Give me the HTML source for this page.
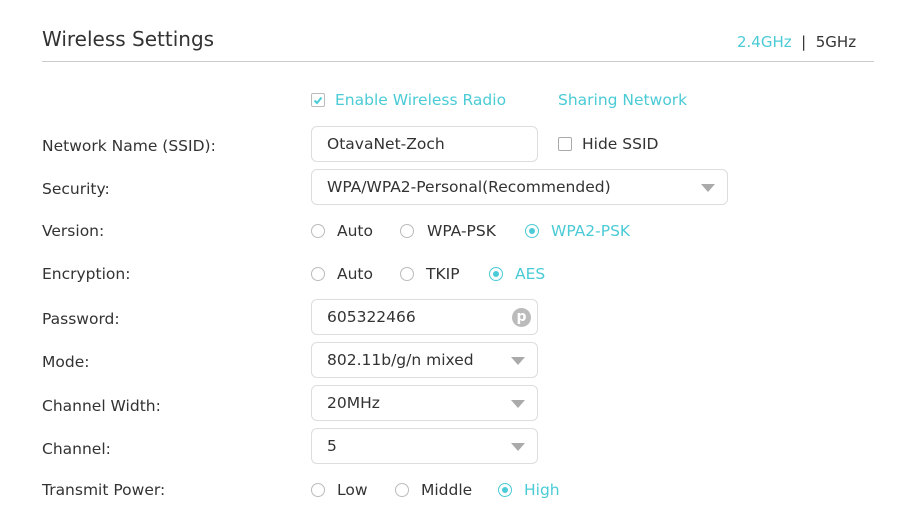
<!DOCTYPE html><html><head><style>
body{margin:0;width:899px;height:520px;background:#fff;font-family:"DejaVu Sans","Liberation Sans",sans-serif;font-size:15.5px;color:#333;position:relative;overflow:hidden}
.a{position:absolute;white-space:nowrap}
.lbl{left:42px}
.box{position:absolute;left:311px;width:225px;height:34px;border:1px solid #ddd;border-radius:6px;box-sizing:content-box}
.box span{position:absolute;left:15px;top:8px}
.tri{position:absolute;right:12px;top:14px;width:0;height:0;border-left:7px solid transparent;border-right:7px solid transparent;border-top:8px solid #aaa}
.r{position:absolute;width:12px;height:12px;border:1px solid #bbb;border-radius:50%}
.r.on{border-color:#4acbd6}
.r.on::after{content:"";position:absolute;left:3px;top:3px;width:6px;height:6px;border-radius:50%;background:#4acbd6}
.c{color:#4acbd6}
</style></head><body>
<div class="a" style="left:42px;top:27px;font-size:20px;color:#333">Wireless Settings</div>
<div class="a" style="left:737px;top:33px;font-size:15px"><span class="c">2.4GHz</span> &nbsp;| &nbsp;5GHz</div>
<div class="a" style="left:42px;top:61px;width:832px;height:1px;background:#ccc"></div>

<div class="a" style="left:311px;top:93px;width:12px;height:12px;border:1px solid #bbb;border-radius:2px"><svg width="12" height="12" style="position:absolute;left:0;top:0"><path d="M2.5 6.5 L5 9 L9.5 3.5" stroke="#4acbd6" stroke-width="2" fill="none"/></svg></div>
<div class="a c" style="left:335px;top:91px">Enable Wireless Radio</div>
<div class="a c" style="left:558px;top:91px">Sharing Network</div>

<div class="a lbl" style="top:137px">Network Name (SSID):</div>
<div class="box" style="top:126px"><span>OtavaNet-Zoch</span></div>
<div class="a" style="left:558px;top:137px;width:12px;height:12px;border:1px solid #aaa;border-radius:2px"></div>
<div class="a" style="left:582px;top:135px">Hide SSID</div>

<div class="a lbl" style="top:180px">Security:</div>
<div class="box" style="top:169px;width:415px"><span>WPA/WPA2-Personal(Recommended)</span><div class="tri"></div></div>

<div class="a lbl" style="top:222px">Version:</div>
<div class="r" style="left:311px;top:224px"></div><div class="a" style="left:337px;top:222px">Auto</div>
<div class="r" style="left:400px;top:224px"></div><div class="a" style="left:427px;top:222px">WPA-PSK</div>
<div class="r on" style="left:525px;top:224px"></div><div class="a c" style="left:551px;top:222px">WPA2-PSK</div>

<div class="a lbl" style="top:265px">Encryption:</div>
<div class="r" style="left:311px;top:267px"></div><div class="a" style="left:337px;top:265px">Auto</div>
<div class="r" style="left:400px;top:267px"></div><div class="a" style="left:426px;top:265px">TKIP</div>
<div class="r on" style="left:489px;top:267px"></div><div class="a c" style="left:515px;top:265px">AES</div>

<div class="a lbl" style="top:310px">Password:</div>
<div class="box" style="top:299px"><span>605322466</span><div style="position:absolute;right:6px;top:8px;width:19px;height:19px;border-radius:50%;background:#bbb;color:#fff;font-weight:bold;font-size:14px;line-height:19px;text-align:center">p</div></div>

<div class="a lbl" style="top:353px">Mode:</div>
<div class="box" style="top:342px"><span>802.11b/g/n mixed</span><div class="tri"></div></div>

<div class="a lbl" style="top:397px">Channel Width:</div>
<div class="box" style="top:385px"><span>20MHz</span><div class="tri"></div></div>

<div class="a lbl" style="top:440px">Channel:</div>
<div class="box" style="top:428px"><span>5</span><div class="tri"></div></div>

<div class="a lbl" style="top:481px">Transmit Power:</div>
<div class="r" style="left:311px;top:483px"></div><div class="a" style="left:337px;top:481px">Low</div>
<div class="r" style="left:395px;top:483px"></div><div class="a" style="left:421px;top:481px">Middle</div>
<div class="r on" style="left:498px;top:483px"></div><div class="a c" style="left:524px;top:481px">High</div>
</body></html>
